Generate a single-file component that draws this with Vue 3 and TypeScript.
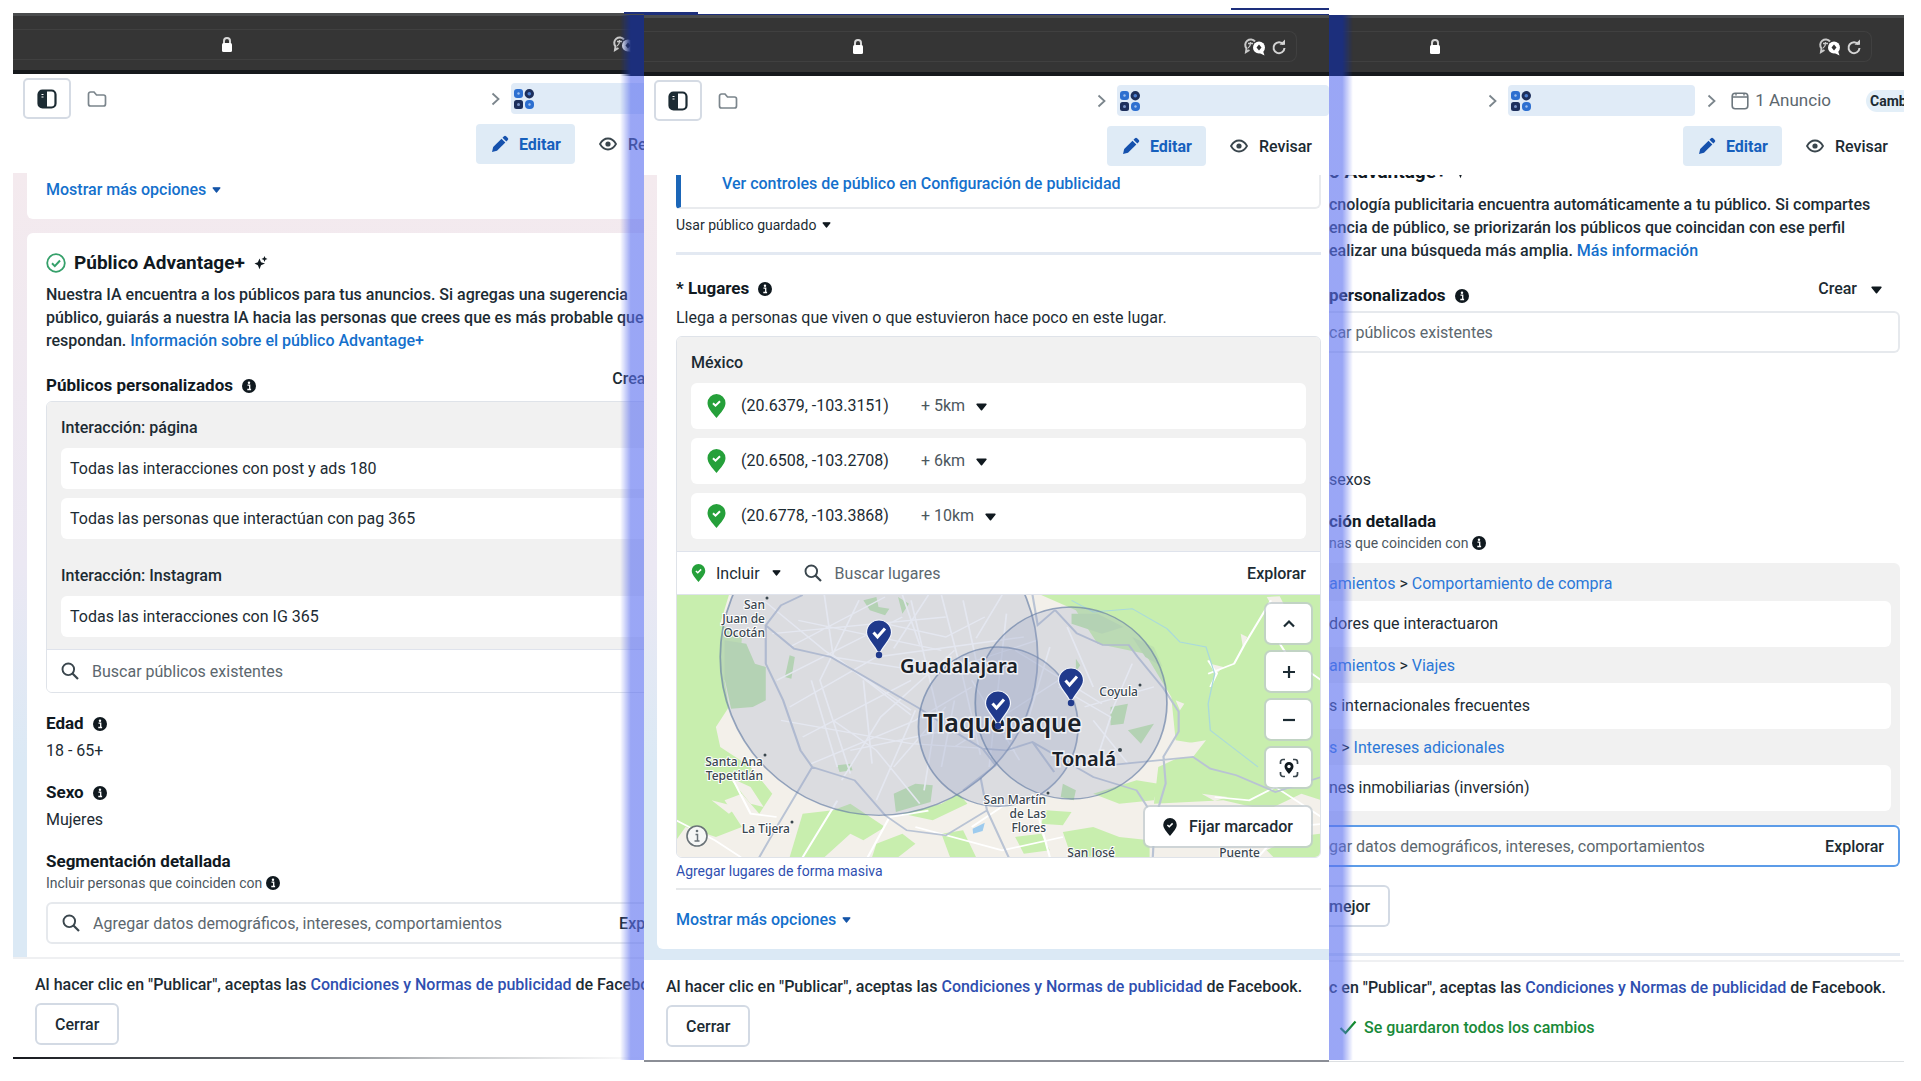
<script setup lang="ts">
import { ref } from 'vue'

interface Place {
  coords: string
  radius: string
}

interface Segment {
  parent: string
  child: string
  item: string
}

const pageAudiences = ['Todas las interacciones con post y ads 180', 'Todas las personas que interactúan con pag 365']
const instagramAudiences = ['Todas las interacciones con IG 365']

const places: Place[] = [
  { coords: '(20.6379, -103.3151)', radius: '+ 5km' },
  { coords: '(20.6508, -103.2708)', radius: '+ 6km' },
  { coords: '(20.6778, -103.3868)', radius: '+ 10km' },
]

const segments: Segment[] = [
  { parent: 'amientos', child: 'Comportamiento de compra', item: 'dores que interactuaron' },
  { parent: 'amientos', child: 'Viajes', item: 's internacionales frecuentes' },
  { parent: 's', child: 'Intereses adicionales', item: 'nes inmobiliarias (inversión)' },
]

const pins = [
  { x: 203, y: 25 },
  { x: 395, y: 73 },
  { x: 322, y: 96 },
]

const audienceQuery = ref('')
const placeQuery = ref('')
const detailQuery = ref('')
const savedQuery = ref('')
const extraQuery = ref('')
</script>

<template>
  <svg class="defs" aria-hidden="true">
    <symbol id="i-lock" viewBox="0 0 12 18">
      <path d="M3 8V5a3 3 0 0 1 6 0v3" fill="none" stroke="#d8d8d8" stroke-width="2" />
      <rect x="1" y="7" width="10" height="9" rx="1.5" fill="#fff" />
    </symbol>
    <symbol id="i-translate" viewBox="0 0 24 18">
      <path d="M12 3.500A5.500 5.500 0 1 0 3.500 10.500L3 14l3.500-2" fill="none" stroke="#c9c9c9" stroke-width="2" />
      <path d="M5 5.500h5M7.500 4v1.500c0 2-1 3.500-2.500 4.500" fill="none" stroke="#c9c9c9" stroke-width="1.300" />
      <circle cx="16" cy="9.500" r="6" fill="#fff" />
      <path d="M20 13l1.500 4.500-5-2.500z" fill="#fff" />
      <path d="M16 6.500l2.500 3-2.500 3-2.500-3z" fill="#333" />
    </symbol>
    <symbol id="i-reload" viewBox="0 0 16 18">
      <path d="M12.500 6.500A5.500 5.500 0 1 0 13.500 10" fill="none" stroke="#d4d4d4" stroke-width="2" />
      <path d="M8.500 6.800h5.500V1.500z" fill="#d4d4d4" />
    </symbol>
    <symbol id="i-panel" viewBox="0 0 20 20">
      <rect x="1.500" y="1.500" width="17" height="17" rx="4" fill="none" stroke="#1c2b33" stroke-width="2.200" />
      <path d="M5 1.500h5v17H5a3.500 3.500 0 0 1-3.500-3.500V5A3.500 3.500 0 0 1 5 1.500z" fill="#1c2b33" />
      <path d="M4.500 5.500h2M4.500 8h2" stroke="#fff" stroke-width="1" />
    </symbol>
    <symbol id="i-folder" viewBox="0 0 20 18">
      <path d="M1.500 4a2 2 0 0 1 2-2h3.500l2.500 3h7a2 2 0 0 1 2 2v7a2 2 0 0 1-2 2h-13a2 2 0 0 1-2-2z" fill="none" stroke="#7b858c" stroke-width="1.700" />
    </symbol>
    <symbol id="i-chevron" viewBox="0 0 9 14">
      <path d="M1.500 1.500L7.500 7l-6 5.500" fill="none" stroke="#7b858c" stroke-width="1.800" />
    </symbol>
    <symbol id="i-adset" viewBox="0 0 20 20">
      <rect x="0" y="0" width="9" height="9" rx="3" fill="#2d6fd0" />
      <circle cx="15.300" cy="4.700" r="4.700" fill="#1d2f5c" />
      <rect x="0" y="11" width="9" height="9" rx="2.500" fill="#1d2f5c" />
      <rect x="11" y="11" width="9" height="9" rx="4" fill="#2d6fd0" />
      <circle cx="4.500" cy="4.500" r="1.200" fill="#9fc0ef" />
      <circle cx="15.300" cy="4.700" r="1.800" fill="#4d7fd0" />
      <circle cx="4.500" cy="15.500" r="1.500" fill="#7b93c5" />
      <circle cx="15.500" cy="15.500" r="1.200" fill="#9fc0ef" />
    </symbol>
    <symbol id="i-pencil" viewBox="0 0 18 18">
      <path d="M1 17l1.200-5L10.500 3.700l3.800 3.800L6 15.800z" fill="#1551ad" />
      <path d="M11.500 2.700L13 1.200a1.500 1.500 0 0 1 2.100 0l1.700 1.700a1.500 1.500 0 0 1 0 2.100l-1.500 1.500z" fill="#1551ad" />
    </symbol>
    <symbol id="i-eye" viewBox="0 0 18 14">
      <path d="M1 7c2-3.500 4.700-5.500 8-5.500s6 2 8 5.500c-2 3.500-4.700 5.500-8 5.500S3 10.500 1 7z" fill="none" stroke="#3a464d" stroke-width="1.800" />
      <circle cx="9" cy="7" r="2.600" fill="#3a464d" />
    </symbol>
    <symbol id="i-caret" viewBox="0 0 10 7">
      <path d="M1 1h8L5 6z" fill="currentColor" stroke="currentColor" stroke-width="1.400" stroke-linejoin="round" />
    </symbol>
    <symbol id="i-info" viewBox="0 0 14 14">
      <circle cx="7" cy="7" r="7" fill="#10191f" />
      <circle cx="7" cy="3.800" r="1.200" fill="#fff" />
      <path d="M5.500 6.200h2.200v4M5.300 10.500h3.800" fill="none" stroke="#fff" stroke-width="1.300" />
    </symbol>
    <symbol id="i-check-circle" viewBox="0 0 20 20">
      <circle cx="10" cy="10" r="8.800" fill="none" stroke="#35a06a" stroke-width="1.800" />
      <path d="M6 10.300l2.800 2.800L14 7.500" fill="none" stroke="#35a06a" stroke-width="2" />
    </symbol>
    <symbol id="i-sparkle" viewBox="0 0 16 16">
      <path d="M6.500 3.500l1.500 3.700 4 1.400-4 1.700-1.500 3.900-1.600-3.900L1.500 8.600l3.400-1.400z" fill="#10191f" />
      <path d="M11.500 1l.9 2 2.100.9-2.100.9-.9 2.200-.9-2.200-2.200-.9 2.200-.9z" fill="#10191f" />
    </symbol>
    <symbol id="i-search" viewBox="0 0 18 18">
      <circle cx="7.300" cy="7.300" r="5.800" fill="none" stroke="#3a464d" stroke-width="1.900" />
      <path d="M11.500 11.500l5.500 5.500" stroke="#3a464d" stroke-width="2.200" />
    </symbol>
    <symbol id="i-place" viewBox="0 0 18 24">
      <path d="M9 0a9 9 0 0 1 9 9c0 5-4.500 9.500-9 15C4.500 18.500 0 14 0 9a9 9 0 0 1 9-9z" fill="currentColor" />
      <path d="M5.500 9.300l2.500 2.400 4.500-4.500" fill="none" stroke="#fff" stroke-width="2" />
    </symbol>
    <symbol id="i-ad" viewBox="0 0 18 18">
      <rect x="1.200" y="1.200" width="15.600" height="15.600" rx="3" fill="none" stroke="#6d777e" stroke-width="1.600" />
      <path d="M1.500 5h15M5 1.500v2M13 1.500v2" stroke="#6d777e" stroke-width="1.400" />
    </symbol>
    <symbol id="i-check" viewBox="0 0 18 15">
      <path d="M1.500 8l5 5L16.500 1.500" fill="none" stroke="#128a2c" stroke-width="2.200" />
    </symbol>
    <symbol id="i-locate" viewBox="0 0 20 20">
      <path d="M1.500 6V4a2.500 2.500 0 0 1 2.500-2.500h2M14 1.500h2A2.500 2.500 0 0 1 18.500 4v2M18.500 14v2a2.500 2.500 0 0 1-2.500 2.500h-2M6 18.500H4A2.500 2.500 0 0 1 1.500 16v-2" fill="none" stroke="#3a464d" stroke-width="1.700" />
      <path d="M10 4a4.500 4.500 0 0 1 4.500 4.500c0 2.500-2 4.500-4.500 7.500-2.500-3-4.500-5-4.500-7.500A4.500 4.500 0 0 1 10 4z" fill="#10191f" />
      <circle cx="10" cy="8.500" r="1.700" fill="#fff" />
    </symbol>
  </svg>

  <main class="stage">
    <!-- Advantage+ audience -->
    <section class="panel panel-start">
      <div class="frame">
        <div class="browser">
          <div class="address">
            <svg class="lock"><use href="#i-lock" /></svg>
            <span class="tools">
              <svg class="translate"><use href="#i-translate" /></svg>
              <svg class="reload"><use href="#i-reload" /></svg>
            </span>
          </div>
        </div>
        <header class="head">
          <nav class="crumbs">
            <button class="toggle" type="button" aria-label="Panel"><svg class="ic20"><use href="#i-panel" /></svg></button>
            <svg class="folder"><use href="#i-folder" /></svg>
            <span class="spacer"></span>
            <svg class="chev"><use href="#i-chevron" /></svg>
            <span class="adset"><svg class="ic20"><use href="#i-adset" /></svg></span>
          </nav>
          <div class="tabs">
            <button class="tab active" type="button"><svg class="ic18"><use href="#i-pencil" /></svg>Editar</button>
            <button class="tab" type="button"><svg class="eye"><use href="#i-eye" /></svg>Revisar</button>
          </div>
        </header>
        <div class="body tinted">
          <div class="card first">
            <a class="link more" href="#">Mostrar más opciones <svg class="caret small"><use href="#i-caret" /></svg></a>
          </div>
          <div class="card second">
            <h2 class="title">
              <svg class="ic20"><use href="#i-check-circle" /></svg>Público Advantage+
              <svg class="sparkle"><use href="#i-sparkle" /></svg>
            </h2>
            <p class="para">
              Nuestra IA encuentra a los públicos para tus anuncios. Si agregas una sugerencia<br />
              público, guiarás a nuestra IA hacia las personas que crees que es más probable que<br />
              respondan. <a class="link" href="#">Información sobre el público Advantage+</a>
            </p>
            <div class="row-head">
              <h3>Públicos personalizados <svg class="info"><use href="#i-info" /></svg></h3>
              <button class="create" type="button">Crear <svg class="caret"><use href="#i-caret" /></svg></button>
            </div>
            <div class="box">
              <div class="group audience">
                <p class="group-label">Interacción: página</p>
                <div v-for="a in pageAudiences" :key="a" class="entry">{{ a }}</div>
                <p class="group-label next">Interacción: Instagram</p>
                <div v-for="a in instagramAudiences" :key="a" class="entry">{{ a }}</div>
              </div>
              <div class="search">
                <svg class="ic18"><use href="#i-search" /></svg>
                <input v-model="audienceQuery" aria-label="Buscar públicos existentes" placeholder="Buscar públicos existentes" />
              </div>
            </div>
            <h3 class="field">Edad <svg class="info"><use href="#i-info" /></svg></h3>
            <p class="value">18 - 65+</p>
            <h3 class="field">Sexo <svg class="info"><use href="#i-info" /></svg></h3>
            <p class="value">Mujeres</p>
            <h3 class="field">Segmentación detallada</h3>
            <p class="sub">Incluir personas que coinciden con <svg class="info"><use href="#i-info" /></svg></p>
            <div class="search outlined">
              <svg class="ic18"><use href="#i-search" /></svg>
              <input v-model="detailQuery" aria-label="Segmentación detallada" placeholder="Agregar datos demográficos, intereses, comportamientos" />
              <button class="explore" type="button">Explorar</button>
            </div>
          </div>
        </div>
        <footer class="foot lined">
          <p>Al hacer clic en "Publicar", aceptas las <a href="#">Condiciones y Normas de publicidad</a> de Facebook.</p>
          <button class="outline" type="button">Cerrar</button>
        </footer>
      </div>
    </section>

    <!-- Locations -->
    <section class="panel-mid">
      <i class="edge edge-left"></i>
      <i class="edge edge-right"></i>
      <div class="frame">
        <div class="browser">
          <div class="address">
            <svg class="lock"><use href="#i-lock" /></svg>
            <span class="tools">
              <svg class="translate"><use href="#i-translate" /></svg>
              <svg class="reload"><use href="#i-reload" /></svg>
            </span>
          </div>
        </div>
        <header class="head">
          <nav class="crumbs">
            <button class="toggle" type="button" aria-label="Panel"><svg class="ic20"><use href="#i-panel" /></svg></button>
            <svg class="folder"><use href="#i-folder" /></svg>
            <span class="spacer"></span>
            <svg class="chev"><use href="#i-chevron" /></svg>
            <span class="adset wide"><svg class="ic20"><use href="#i-adset" /></svg></span>
          </nav>
          <div class="tabs">
            <button class="tab active" type="button"><svg class="ic18"><use href="#i-pencil" /></svg>Editar</button>
            <button class="tab" type="button"><svg class="eye"><use href="#i-eye" /></svg>Revisar</button>
          </div>
        </header>
        <div class="body tinted">
          <div class="card places">
            <div class="note"><a class="link" href="#">Ver controles de público en Configuración de publicidad</a></div>
            <button class="saved" type="button">Usar público guardado <svg class="caret small"><use href="#i-caret" /></svg></button>
            <hr class="rule cool" />
            <h3 class="lugares">* Lugares <svg class="info"><use href="#i-info" /></svg></h3>
            <p class="desc">Llega a personas que viven o que estuvieron hace poco en este lugar.</p>
            <div class="box">
              <div class="group">
                <p class="group-label">México</p>
                <div v-for="p in places" :key="p.coords" class="entry place">
                  <svg class="pin"><use href="#i-place" /></svg>
                  <span class="coords">{{ p.coords }}</span>
                  <button class="radius" type="button">{{ p.radius }} <svg class="caret"><use href="#i-caret" /></svg></button>
                </div>
              </div>
              <div class="search">
                <button class="include" type="button">
                  <svg class="pin mini"><use href="#i-place" /></svg>Incluir<svg class="caret small"><use href="#i-caret" /></svg>
                </button>
                <svg class="ic18"><use href="#i-search" /></svg>
                <input v-model="placeQuery" aria-label="Buscar lugares" placeholder="Buscar lugares" />
                <button class="explore" type="button">Explorar</button>
              </div>
              <div class="map">
                <svg class="map-art" viewBox="0 0 645 262" preserveAspectRatio="xMidYMid slice">
                  <rect width="645" height="262" fill="#f3f0ea" />
                  <g transform="scale(.4337 .3333) translate(-38 -44)">
                    <g fill="#c8eeae">
                      <path d="M38 44H160L140 130 190 170 185 260 150 300 160 380 130 440 140 500 210 560 260 640 230 700 190 640 150 660 190 740 130 770 60 740 38 780z" />
                      <path d="M880 44H1526V660L1480 640 1400 690 1300 660 1140 670 1150 560 1200 530 1240 490 1190 480 1180 350 1120 220 1010 190 960 90z" />
                      <path d="M330 700L400 690 440 670 520 740 470 780 440 760 380 831H300z" />
                      <path d="M930 755L1000 740 1060 770 1130 780 1130 831H950z" />
                      <path d="M1000 640L1100 600 1150 610 1140 660 1060 670z" />
                      <path d="M890 690l60 5-20 40-50-5zM560 700l90-30 40-30 20 30-80 50zM820 770l60-10 20 50-60 10z" />
                      <path d="M1400 810l60-40 66-10v71h-110z" />
                      <path d="M650 760l50-10 30 81h-60zM500 790l60-30 30 30-40 41h-60z" />
                    </g>
                    <g fill="#bfe3ae">
                      <path d="M150 180l50 10 20 60 25 10v100l-30 20-50 5-15-90z" />
                      <path d="M540 640l50-30 40 5-5 50-80 30zM300 225l12 5-8 65-15-5zM470 60l30-10 5 30 25 5-10 20-35-15zM550 50l25 20-15 30z" />
                      <path d="M950 100l60 0 60 40-50 20-70-30zM1040 380l40-10-10 60-30 5zM1080 450l60-20-30 60zM960 235l10 20-10 20zM930 610l30 20-5 30-30-10zM410 555l30-5 5 20-30 5z" />
                      <path d="M1090 170l50 30 20 60-40-30z" />
                    </g>
                    <g fill="#f3f0ea">
                      <path d="M1190 360l20 10-10 20zM1210 490l50-10-30 50-40 5zM1270 250l30 10-20 25zM1340 160l15 10-10 30zM1400 50l30-2 10 25-25 10z" />
                      <path d="M160 590l50 30 30 60-30-10zM120 660l60 20-20 20zM1250 640l60 10-30 12z" />
                    </g>
                    <g fill="none" stroke="#fff" stroke-width="5">
                      <path d="M38 720l90 60 60 51M1410 60l-60 130-25 60-60 30M1265 240l20 40-15 40M1430 190l20 40 76 70M1280 650l80 10 60-40 106 90" />
                      <path d="M170 600l40 100 60 10M330 831l80-170M480 831l50-120 90-20M590 740l200 70 140-40M870 690l30 141M1380 831l60-90 86-10M720 740l80-70" />
                    </g>
                    <g fill="none" stroke="#fff" stroke-width="4">
                      <path d="M240 60l140 150 200 180M300 200l220-150M320 120l330 90M270 300l290-190M380 44l20 180 180 180M460 60l-90 240 70 280M520 130l140 40 90-60M650 44l50 250 40 230M580 60l60 330-30 240M260 160l400-50M400 230l240 50 230-100M300 380l200-150 340-60M330 470l250-170M350 550l240-130 130-100M400 420l100 90 100 160M280 420l300 70 240 20M420 600l90-190 170-200M500 660l90-270M440 510l260-70M720 300l110 240M680 500l240-200M760 560l40-460M820 210l200 160M900 200l-60 260M920 320l120 90-30 120M940 140l60 180M980 380l160-60M1000 420l80 130M1090 250l-50 150" />
                      <path d="M560 44l40 150M620 44l-80 160M700 60l30 180M790 44l-60 130M470 300l20 250M350 300l60 260M540 560l120-180M650 560l30-200" />
                    </g>
                    <g fill="none" stroke="#b9c3d4" stroke-width="5">
                      <path d="M330 44L280 75 245 135 310 205 395 230 600 385 700 470 745 505 800 510 860 485 1000 590 1100 630 1130 690M245 135V250L285 360 325 510 352 560 450 600 520 705 570 750 660 765 755 690M352 560L318 635 270 740 230 831M860 44l12 90 40-45M912 89l50 70 60 35 60 0 20 35 60 95 35 70 0 60-35 75 5 80-25 110-5 120M1050 553l180-23 40 35 60 20 90 50 106-45M860 485l50 90M740 590l15 100 50 141M745 505l30 50-75 75" />
                    </g>
                    <path d="M950 60l50 35 90-10 80 60 30 40 60 15 20 80-15 90 5 80 50 50 60 60" fill="none" stroke="#a9d9dc" stroke-width="3" />
                    <path d="M722 745l28-18-5 25-22 8z" fill="#9dcbee" />
                    <g fill="rgba(152,163,198,.26)" stroke="rgba(100,124,165,.65)" stroke-width="4">
                      <ellipse cx="506" cy="230" rx="366" ry="475" />
                      <ellipse cx="781" cy="439" rx="184" ry="239" />
                      <ellipse cx="949" cy="368" rx="221" ry="288" />
                    </g>
                  </g>
                  <g class="town" text-anchor="end">
                    <text x="89" y="14">San</text><text x="89" y="28">Juan de</text><text x="89" y="42">Ocotán</text>
                    <text x="87" y="171">Santa Ana</text><text x="87" y="185">Tepetitlán</text>
                    <text x="114" y="238">La Tijera</text><text x="462" y="101">Coyula</text>
                    <text x="370" y="209">San Martín</text><text x="370" y="223">de Las</text><text x="370" y="237">Flores</text>
                    <text x="439" y="262">San José</text><text x="584" y="262">Puente</text>
                  </g>
                  <g fill="#3a464d">
                    <circle cx="91" cy="3" r="1.500" /><circle cx="89" cy="160" r="1.500" /><circle cx="116" cy="227" r="1.500" />
                    <circle cx="464" cy="90" r="1.500" /><circle cx="372" cy="198" r="1.500" /><circle cx="444" cy="155" r="2" />
                  </g>
                  <text class="city" x="224" y="78">Guadalajara</text>
                  <text class="city big" x="247" y="137">Tlaquepaque</text>
                  <text class="city" x="376" y="171">Tonalá</text>
                  <g v-for="p in pins" :key="p.x" :transform="`translate(${p.x} ${p.y})`">
                    <path d="M0 0a12.500 12.500 0 0 1 12.500 12.500C12.500 19 5 25 1.500 32h-3C-5 25-12.500 19-12.500 12.500A12.500 12.500 0 0 1 0 0z" fill="#203a8c" stroke="#f4f6fb" stroke-width="1.200" />
                    <circle cx="0" cy="35" r="3.200" fill="#203a8c" />
                    <path d="M-5.500 12.500l4 4.500 7.500-8.500" fill="none" stroke="#fff" stroke-width="3" />
                  </g>
                  <circle cx="21" cy="241" r="10" fill="#f6f7f6" stroke="#6a7378" stroke-width="1.600" />
                  <path d="M19.500 239.500h2v6M18.500 246h5" fill="none" stroke="#6a7378" stroke-width="1.500" />
                  <circle cx="21" cy="236" r="1.300" fill="#6a7378" />
                </svg>
                <div class="controls">
                  <button type="button" aria-label="Arriba"><svg class="glyph" viewBox="0 0 14 14"><path d="M2 9.500l5-5 5 5" /></svg></button>
                  <button type="button" aria-label="Acercar"><svg class="glyph" viewBox="0 0 14 14"><path d="M7 1v12M1 7h12" /></svg></button>
                  <button type="button" aria-label="Alejar"><svg class="glyph" viewBox="0 0 14 14"><path d="M1 7h12" /></svg></button>
                  <button type="button" aria-label="Ubicar"><svg class="ic20"><use href="#i-locate" /></svg></button>
                  <button class="drop" type="button"><svg class="pin dark"><use href="#i-place" /></svg>Fijar marcador</button>
                </div>
              </div>
            </div>
            <a class="bulk" href="#">Agregar lugares de forma masiva</a>
            <hr class="rule" />
            <a class="link more" href="#">Mostrar más opciones <svg class="caret small"><use href="#i-caret" /></svg></a>
          </div>
        </div>
        <footer class="foot">
          <p>Al hacer clic en "Publicar", aceptas las <a href="#">Condiciones y Normas de publicidad</a> de Facebook.</p>
          <button class="outline" type="button">Cerrar</button>
        </footer>
      </div>
    </section>

    <!-- Detailed targeting -->
    <section class="panel panel-end">
      <div class="browser">
        <div class="address">
          <svg class="lock"><use href="#i-lock" /></svg>
          <span class="tools">
            <svg class="translate"><use href="#i-translate" /></svg>
            <svg class="reload"><use href="#i-reload" /></svg>
          </span>
        </div>
      </div>
      <header class="head">
        <nav class="crumbs">
          <span class="spacer"></span>
          <svg class="chev"><use href="#i-chevron" /></svg>
          <span class="adset"><svg class="ic20"><use href="#i-adset" /></svg></span>
          <svg class="chev after"><use href="#i-chevron" /></svg>
          <span class="ad"><svg class="ic18"><use href="#i-ad" /></svg>1 Anuncio</span>
          <span class="pill">Camb</span>
        </nav>
        <div class="tabs">
          <button class="tab active" type="button"><svg class="ic18"><use href="#i-pencil" /></svg>Editar</button>
          <button class="tab" type="button"><svg class="eye"><use href="#i-eye" /></svg>Revisar</button>
        </div>
      </header>
      <div class="body">
        <div class="scrolled"><h2 class="title">o Advantage+ <svg class="sparkle"><use href="#i-sparkle" /></svg></h2></div>
        <p class="para">
          cnología publicitaria encuentra automáticamente a tu público. Si compartes<br />
          encia de público, se priorizarán los públicos que coincidan con ese perfil<br />
          ealizar una búsqueda más amplia. <a class="link" href="#">Más información</a>
        </p>
        <div class="row-head">
          <h3>personalizados <svg class="info"><use href="#i-info" /></svg></h3>
          <button class="create" type="button">Crear <svg class="caret"><use href="#i-caret" /></svg></button>
        </div>
        <div class="search outlined cut">
          <input v-model="savedQuery" aria-label="Públicos existentes" placeholder="car públicos existentes" />
        </div>
        <p class="value sexes">sexos</p>
        <h3 class="field">ción detallada</h3>
        <p class="sub">nas que coinciden con <svg class="info"><use href="#i-info" /></svg></p>
        <div class="segments">
          <template v-for="s in segments" :key="s.item">
            <p class="path"><a href="#">{{ s.parent }}</a> &gt; <a href="#">{{ s.child }}</a></p>
            <div class="entry">{{ s.item }}</div>
          </template>
        </div>
        <div class="search outlined cut focus">
          <input v-model="extraQuery" aria-label="Agregar datos" placeholder="gar datos demográficos, intereses, comportamientos" />
          <button class="explore" type="button">Explorar</button>
        </div>
        <button class="outline cut-btn" type="button">mejor</button>
        <hr class="rule cool thin" />
      </div>
      <footer class="foot lined">
        <p>c en "Publicar", aceptas las <a href="#">Condiciones y Normas de publicidad</a> de Facebook.</p>
        <p class="saved-ok"><svg class="tick"><use href="#i-check" /></svg>Se guardaron todos los cambios</p>
      </footer>
    </section>
  </main>
</template>

<style>
body {
  margin: 0;
  background: #fff;
}
</style>

<style scoped>
* {
  box-sizing: border-box;
}
.defs {
  position: absolute;
  width: 0;
  height: 0;
}
.stage {
  display: grid;
  grid-template-columns: 631fr 685fr 575fr;
  align-items: start;
  padding: 13px 17px 20px 13px;
  font: 16px/23px Roboto, "Liberation Sans", sans-serif;
  color: #1c2b33;
  white-space: nowrap;
}
h2, h3, p, hr {
  margin: 0;
}
button, input {
  font: inherit;
  color: inherit;
  border: 0;
  padding: 0;
  background: none;
}
svg {
  flex: none;
}
a {
  color: #2f4fb0;
  text-decoration: none;
}
.link {
  color: #1470cc;
}
.panel {
  overflow: hidden;
  min-width: 0;
}
.panel-start {
  border-bottom: 2px solid;
  border-image: linear-gradient(to right, #15171c, #6c7074 40%, #c6c8ca 70%, #fff) 1;
}
.panel-start .frame {
  width: calc(100% + 54px);
}
.panel-mid {
  position: relative;
  min-width: 0;
  margin-top: 2px;
  background: #fff;
  border-bottom: 2px solid #8b8e96;
  box-shadow: 0 -1px #1d2f7c;
}
.panel-mid .frame {
  overflow: hidden;
}
/* blue halo cast over both neighbours */
.panel-mid::before,
.panel-mid::after {
  content: "";
  position: absolute;
  top: 0;
  bottom: 0;
  width: 24px;
  background: linear-gradient(#1c2f7c 61px, rgba(92, 112, 240, .62) 61px);
}
.panel-mid::before {
  right: 100%;
  mask-image: linear-gradient(to left, #000 55%, transparent);
}
.panel-mid::after {
  left: 100%;
  mask-image: linear-gradient(to right, #000 55%, transparent);
}
.edge {
  position: absolute;
  height: 2px;
  background: #1d2f7c;
}
.edge-left {
  top: -3px;
  left: -20px;
  width: 74px;
}
.edge-right {
  top: -7px;
  right: 0;
  width: 98px;
}
.panel-end {
  margin-top: 2px;
  border-bottom: 1px solid #dcdfe2;
}
.browser {
  height: 61px;
  padding: 14px 32px 0 0;
  background: #353535;
  border-top: 3px solid #4a4c4d;
  border-bottom: 4px solid #16191c;
}
.address {
  display: flex;
  align-items: center;
  justify-content: space-between;
  height: 31px;
  margin-top: -1px;
  padding: 0 9px 0 208px;
  border: 1px solid #404040;
  border-left: 0;
  border-radius: 0 8px 8px 0;
}
.panel-end .address {
  padding-left: 100px;
}
.lock {
  width: 12px;
  height: 18px;
}
.tools {
  display: flex;
  gap: 4px;
}
.translate {
  width: 24px;
  height: 18px;
}
.reload {
  width: 16px;
  height: 18px;
}
.head {
  height: 99px;
  padding-top: 4px;
  background: #fff;
}
.crumbs {
  display: flex;
  align-items: center;
  height: 41px;
}
.toggle {
  display: grid;
  place-items: center;
  width: 48px;
  height: 41px;
  margin: 0 16px 0 10px;
  border: 2px solid #d5dbe4;
  border-radius: 5px;
  background: #fff;
}
.ic20 {
  width: 20px;
  height: 20px;
}
.ic18 {
  width: 18px;
  height: 18px;
}
.folder {
  width: 20px;
  height: 18px;
}
.spacer {
  flex: 1;
}
.chev {
  width: 9px;
  height: 14px;
  margin-right: 11px;
}
.chev.after {
  margin: 0 15px 0 12px;
}
.adset {
  display: flex;
  align-items: center;
  width: 187px;
  height: 31px;
  padding-left: 3px;
  border-radius: 4px;
  background: #e0ebf7;
}
.adset.wide {
  width: 212px;
}
.ad {
  display: flex;
  align-items: center;
  gap: 6px;
  font-size: 17px;
  color: #5c676e;
}
.pill {
  width: 38px;
  height: 22px;
  margin-left: 35px;
  padding-left: 4px;
  overflow: hidden;
  border-radius: 11px 0 0 11px;
  background: #e3eff8;
  font-size: 14px;
  font-weight: 700;
  line-height: 22px;
}
.tabs {
  display: flex;
  justify-content: flex-end;
  gap: 24px;
  margin-top: 5px;
  padding-right: 17px;
}
.tab {
  display: flex;
  align-items: center;
  gap: 11px;
  height: 40px;
  font-weight: 500;
}
.tab.active {
  gap: 10px;
  padding: 0 14px 0 15px;
  border-radius: 4px;
  background: #dfebf6;
  color: #1660bd;
  font-weight: 700;
}
.eye {
  width: 18px;
  height: 14px;
}
.tinted {
  padding-left: 14px;
  background: linear-gradient(#f4eaee, #ebe8f3 50%, #dbe9f5 75%);
}
.card {
  padding: 0 4px 0 19px;
  background: #fff;
}
.first {
  padding-top: 5px;
  padding-bottom: 18px;
  margin-bottom: 14px;
  border-radius: 0 0 0 6px;
}
.second {
  padding-top: 18px;
  padding-bottom: 13px;
  border-radius: 6px 0 0 0;
}
.more {
  display: block;
  font-weight: 500;
}
.caret {
  width: 11px;
  height: 8px;
  margin-left: 7px;
  color: #10191f;
}
.create .caret {
  margin-left: 10px;
}
.caret.small {
  width: 9px;
  height: 6px;
  margin-left: 2px;
  vertical-align: 2px;
}
.more .caret {
  color: #1555a8;
}
.title {
  display: flex;
  align-items: center;
  gap: 8px;
  font-size: 19px;
  font-weight: 700;
  line-height: 24px;
  color: #10191f;
}
.sparkle {
  width: 16px;
  height: 16px;
}
.para {
  margin-top: 8px;
  font-weight: 500;
}
.row-head {
  display: flex;
  justify-content: space-between;
  margin: 21px 18px 4px 0;
}
h3 {
  font-size: 17px;
  font-weight: 700;
  line-height: 24px;
  color: #10191f;
}
.info {
  width: 14px;
  height: 14px;
  margin-left: 5px;
  vertical-align: -2px;
}
.create {
  height: 12px;
  line-height: 12px;
  font-weight: 500;
}
.box {
  border: 1px solid #dfe3e9;
  border-radius: 6px;
  overflow: hidden;
}
.group {
  padding: 14px 14px 12px;
  background: #f1f1f1;
  border-bottom: 1px solid #dfe3ec;
}
.group-label {
  margin-bottom: 9px;
  font-weight: 500;
}
.group-label.next {
  margin-top: 25px;
}
.entry {
  height: 46px;
  padding: 0 9px;
  border-radius: 6px;
  background: #fff;
  line-height: 46px;
}
.audience .entry {
  height: 41px;
  line-height: 41px;
}
.entry + .entry {
  margin-top: 9px;
}
.search {
  display: flex;
  align-items: center;
  gap: 13px;
  height: 42px;
  padding: 0 14px;
  background: #fff;
}
.search input {
  flex: 1;
  min-width: 0;
  height: 24px;
  outline: 0;
}
.search input::placeholder {
  color: #5c676e;
  opacity: 1;
}
.outlined {
  margin-top: 9px;
  border: 2px solid #e6e9ed;
  border-radius: 6px;
}
.explore {
  font-weight: 500;
}
.field {
  margin-top: 18px;
}
.value {
  margin-top: 4px;
}
.sub {
  font-size: 14px;
  line-height: 20px;
  color: #4c575e;
}
.sub .info {
  margin-left: 0;
}
.foot {
  padding: 15px 0 13px 22px;
  background: #fff;
}
.foot p {
  font-weight: 500;
}
.lined {
  padding-top: 14px;
  padding-bottom: 12px;
  border-top: 2px solid #eff0f2;
}
.outline {
  height: 42px;
  margin-top: 7px;
  padding: 0 18px;
  border: 2px solid #d3dae4;
  border-radius: 6px;
  background: #fff;
  font-weight: 500;
}
.panel-mid .tinted {
  padding: 0 0 11px 13px;
}
.places {
  padding-right: 8px;
  padding-bottom: 18px;
  border-radius: 0 0 0 6px;
}
.note {
  height: 34px;
  padding-left: 41px;
  border: solid #e9ebee;
  border-width: 0 2px 2px 0;
  border-left: 5px solid #1b66b8;
  border-radius: 0 0 6px 4px;
  line-height: 17px;
}
.note .link {
  font-weight: 500;
}
.saved {
  display: block;
  margin-top: 6px;
  font-size: 14px;
  line-height: 20px;
}
.rule {
  height: 2px;
  margin: 7px 0 18px;
  border: 0;
  background: #e6e8ea;
}
.rule.cool {
  height: 3px;
  margin: 17px 0 21px;
  background: #e3e9f2;
}
.desc {
  margin: 6px 0 7px;
}
.place {
  display: flex;
  align-items: center;
  padding-left: 16px;
}
.pin {
  width: 19px;
  height: 24px;
  color: #25a03a;
}
.pin.mini {
  width: 15px;
  height: 18px;
}
.pin.dark {
  width: 14px;
  height: 18px;
  color: #10191f;
}
.coords {
  margin: 0 32px 0 15px;
}
.radius {
  color: #4c575e;
}
.include {
  display: flex;
  align-items: center;
  gap: 10px;
  margin-right: 10px;
}
.map {
  position: relative;
  height: 263px;
  border-top: 1px solid #dfe3ec;
}
.map-art {
  display: block;
  width: 100%;
  height: 262px;
}
.town {
  font: 500 12px "Noto Sans", sans-serif;
  fill: #3a4650;
  stroke: #fff;
  stroke-width: 2px;
  paint-order: stroke;
}
.city {
  font: 600 20px "Noto Sans", sans-serif;
  fill: #1a2128;
  stroke: #eef0f5;
  stroke-width: 3px;
  paint-order: stroke;
}
.city.big {
  font-size: 25px;
}
.controls {
  position: absolute;
  top: 9px;
  right: 9px;
  display: flex;
  flex-direction: column;
  align-items: flex-end;
  gap: 9px;
}
.controls button {
  display: flex;
  align-items: center;
  justify-content: center;
  width: 45px;
  height: 39px;
  border-radius: 5px;
  background: #fff;
  box-shadow: 0 0 0 2px rgba(190, 200, 205, .7);
}
.controls .drop {
  gap: 12px;
  width: 166px;
  margin-top: 11px;
  font-weight: 500;
}
.glyph {
  width: 14px;
  height: 14px;
  fill: none;
  stroke: #1c2b33;
  stroke-width: 2.200;
}
.bulk {
  display: block;
  margin-top: 3px;
  font-size: 14px;
  line-height: 20px;
}
.panel-end .body {
  padding-right: 4px;
}
.panel-end .tabs {
  padding-right: 16px;
}
.scrolled {
  display: flex;
  align-items: flex-end;
  height: 9px;
  overflow: hidden;
}
.panel-end .para {
  margin-top: 9px;
}
.search.cut {
  margin-top: 0;
  padding-left: 0;
  border-left: 0;
  border-radius: 0 6px 6px 0;
}
.search.focus {
  border-color: #5c9ce8;
}
.sexes {
  margin-top: 115px;
}
.segments {
  margin-top: 10px;
  padding: 9px 9px 14px 0;
  border-radius: 0 6px 0 0;
  background: #f1f1f1;
}
.segments .entry {
  margin: 6px 0 7px;
  padding-left: 0;
  border-radius: 0 6px 6px 0;
}
.segments .entry:last-child {
  margin-bottom: 0;
}
.path a {
  color: #2b78d8;
}
.cut-btn {
  display: block;
  margin-top: 18px;
  padding-left: 0;
  border-left: 0;
  border-radius: 0 6px 6px 0;
}
.rule.cool.thin {
  margin: 26px 0 4px;
}
.panel-end .foot {
  padding-left: 0;
  padding-bottom: 22px;
}
.foot .saved-ok {
  display: flex;
  align-items: center;
  gap: 7px;
  margin-top: 17px;
  padding-left: 10px;
  color: #188a38;
}
.tick {
  width: 18px;
  height: 15px;
}
</style>
